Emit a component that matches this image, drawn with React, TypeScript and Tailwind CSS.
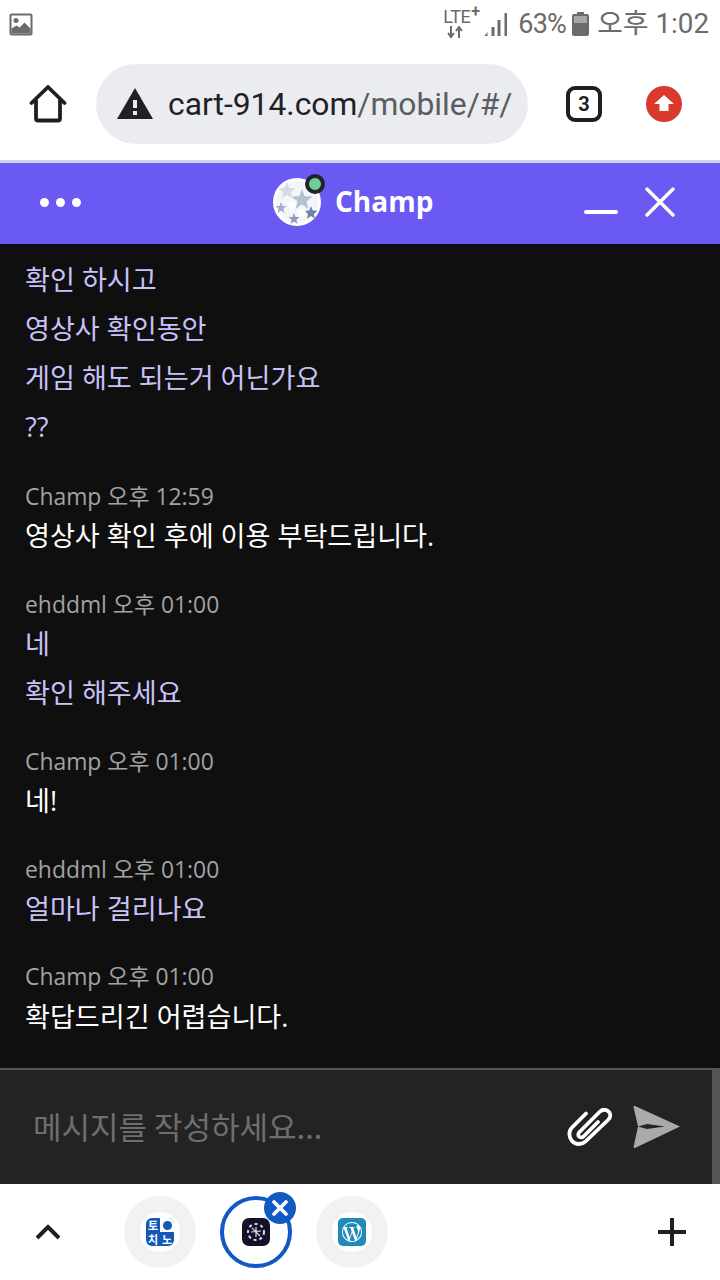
import React from "react";
import { SiWordpress } from "react-icons/si";

const sans = "font-['Open_Sans','Noto_Sans_CJK_KR',sans-serif]";

function Star({ x, y, r, fill }: { x: number; y: number; r: number; fill: string }) {
  const pts: string[] = [];
  for (let i = 0; i < 10; i++) {
    const a = -Math.PI / 2 + (i * Math.PI) / 5;
    const rr = i % 2 === 0 ? r : r * 0.42;
    pts.push(`${(x + rr * Math.cos(a)).toFixed(1)},${(y + rr * Math.sin(a)).toFixed(1)}`);
  }
  return <polygon points={pts.join(" ")} fill={fill} />;
}

function Ball({ size }: { size: number }) {
  return (
    <svg width={size} height={size} viewBox="0 0 48 48">
      <circle cx="24" cy="24" r="24" fill="#fff" />
      <circle cx="24" cy="24" r="21" fill="#f3f5f8" />
      <Star x={14} y={13} r={9} fill="#d5dbe6" />
      <Star x={29} y={22} r={11} fill="#b4c0d3" />
      <Star x={38} y={35} r={7} fill="#6d83a6" />
      <Star x={21} y={41} r={6} fill="#8c9dba" />
      <Star x={8} y={30} r={6} fill="#9fb0c8" />
      <circle cx="19" cy="27" r="4" fill="#fff" />
      <circle cx="29" cy="35" r="4" fill="#fff" />
    </svg>
  );
}

function StatusBar() {
  return (
    <div className="h-[48px] flex items-center pl-[9px] pr-[11px] bg-white text-[#6b6b6b]">
      <svg width="24" height="23" viewBox="0 0 24 23">
        <rect x="0.5" y="0.5" width="23" height="22" rx="2" fill="#6b6b6b" />
        <rect x="2.5" y="2.5" width="19" height="18" fill="#fff" />
        <circle cx="7" cy="7.5" r="2.5" fill="#6b6b6b" />
        <path d="M2.5 20.5v-5l5-3 3 2 5-5 6 6v5z" fill="#6b6b6b" />
      </svg>
      <div className="ml-auto flex items-center">
        <div className="w-[39px] h-[30px] relative mr-[1px]">
          <span className="absolute left-0 top-[-2px] text-[18px] leading-[20px] font-['Roboto'] tracking-[-0.5px]">
            LTE
          </span>
          <span className="absolute left-[28px] top-[-5px] text-[16px] leading-[16px] font-['Roboto'] font-bold">
            +
          </span>
          <svg className="absolute left-[4px] top-[17px]" width="16" height="13" viewBox="0 0 16 13">
            <path d="M4 0v9M1 7l3 4 3-4M12 12V3M9 5l3-4 3 4" stroke="#6b6b6b" strokeWidth="2" fill="none" />
          </svg>
        </div>
        <svg width="25" height="24" viewBox="0 0 24 24" className="mr-[10px]">
          <path d="M1 24l3-4v4z" fill="#6b6b6b" />
          <rect x="8" y="15" width="3" height="9" fill="#6b6b6b" />
          <rect x="14" y="8" width="3" height="16" fill="#6b6b6b" />
          <rect x="21" y="1" width="2.5" height="23" fill="#6b6b6b" />
        </svg>
        <span className="text-[27px] leading-[50px] font-['Roboto'] tracking-[-0.8px] w-[51px] whitespace-nowrap">63%</span>
        <svg width="17" height="24" viewBox="0 0 17 24" className="ml-[3px] mr-[8px]">
          <path d="M5 0h7v2h3a2 2 0 012 2v18a2 2 0 01-2 2H2a2 2 0 01-2-2V4a2 2 0 012-2h3z" fill="#6b6b6b" />
          <rect x="2" y="4" width="13" height="7" fill="#a8a8a8" />
        </svg>
        <span className="text-[27.800px] leading-[50px] font-['Roboto','Noto_Sans_CJK_KR',sans-serif] whitespace-nowrap">오후 1:02</span>
      </div>
    </div>
  );
}

function UrlBar() {
  return (
    <div className="h-[112px] flex items-center bg-white relative">
      <div className="w-[96px] flex justify-center">
        <svg width="38" height="38" viewBox="0 0 38 38">
          <path
            d="M2.5 18.5L19 2.5l16.500 16M7 15.500V34a2 2 0 002 2h20a2 2 0 002-2V15.500"
            transform="translate(0 -0.5)"
            fill="none"
            stroke="#1f1f1f"
            strokeWidth="3.8"
            strokeLinecap="round"
            strokeLinejoin="round"
          />
        </svg>
      </div>
      <div className="w-[432px] h-[80px] rounded-[40px] bg-[#ebecf0] flex items-center pl-[21px] overflow-hidden">
        <svg width="36" height="32" viewBox="0 0 36 32" className="shrink-0">
          <path d="M18 0l18 31H0z" fill="#202124" />
          <rect x="16" y="12" width="4" height="8" fill="#ebecf0" />
          <rect x="16" y="23" width="4" height="4" fill="#ebecf0" />
        </svg>
        <div className="ml-[15px] w-[345px] overflow-hidden whitespace-nowrap text-[31.800px] leading-[40px] font-['Roboto'] text-[#5a5d61]">
          <span className="text-[#202124]">cart-914.com</span>/mobile/#/
        </div>
      </div>
      <div className="ml-[38px] w-[36px] h-[36px] rounded-[9px] border-[4px] border-[#1f1f1f] flex items-center justify-center text-[20px] font-bold font-['Roboto'] text-[#1f1f1f]">
        3
      </div>
      <div className="ml-[44px] w-[36px] h-[36px] rounded-full bg-[#d93a2b] flex items-center justify-center">
        <svg width="20" height="18" viewBox="0 0 20 18">
          <path d="M10 0l10 9h-5.500v7h-9V9H0z" fill="#fff" />
        </svg>
      </div>
    </div>
  );
}

function Header() {
  return (
    <div className="h-[84px] bg-[#6a59f2] border-t-[3px] border-[#d3d3ea] pb-[3px] flex items-center relative">
      <div className="ml-[40px] flex gap-[7px]">
        <span className="w-[9px] h-[9px] rounded-full bg-white" />
        <span className="w-[9px] h-[9px] rounded-full bg-white" />
        <span className="w-[9px] h-[9px] rounded-full bg-white" />
      </div>
      <div className="ml-[192px] relative w-[48px] h-[48px]">
        <Ball size={48} />
        <span className="absolute left-[32px] top-[-4px] w-[20px] h-[20px] rounded-full bg-[#6fce96] border-[4px] border-[#20242a]" />
      </div>
      <span className="ml-[14px] mb-[2px] text-[28px] leading-[40px] font-bold font-['Open_Sans'] text-white">Champ</span>
      <div className="ml-auto flex items-center">
        <span className="w-[34px] h-[4px] rounded-full bg-white mt-[19px]" />
        <svg width="32" height="32" viewBox="0 0 32 32" className="ml-[26px] mr-[44px]">
          <path d="M3 3l26 26M29 3L3 29" stroke="#fff" strokeWidth="3.4" strokeLinecap="round" />
        </svg>
      </div>
    </div>
  );
}

type Group = { meta?: string; lines: string[]; mine: boolean };

const groups: Group[] = [
  { lines: ["확인 하시고", "영상사 확인동안", "게임 해도 되는거 어닌가요", "??"], mine: true },
  { meta: "Champ 오후 12:59", lines: ["영상사 확인 후에 이용 부탁드립니다."], mine: false },
  { meta: "ehddml 오후 01:00", lines: ["네", "확인 해주세요"], mine: true },
  { meta: "Champ 오후 01:00", lines: ["네!"], mine: false },
  { meta: "ehddml 오후 01:00", lines: ["얼마나 걸리나요"], mine: true },
  { meta: "Champ 오후 01:00", lines: ["확답드리긴 어렵습니다."], mine: false },
];

function Chat() {
  return (
    <div className={`h-[824px] bg-[#0f0f10] overflow-hidden px-[25px] pt-[11px] flex flex-col gap-[28.400px] ${sans}`}>
      {groups.map((g, i) => (
        <div key={i} className="first:mb-[1.500px]">
          {g.meta && <div className="h-[30.500px] leading-[31px] text-[22.900px] text-[#a2a2a2]">{g.meta}</div>}
          {g.lines.map((l) => (
            <div
              key={l}
              className={`h-[49px] leading-[49px] text-[27.100px] ${g.mine ? "text-[#c9c2f8]" : "text-white"}`}
            >
              {l}
            </div>
          ))}
        </div>
      ))}
    </div>
  );
}

function InputBar() {
  return (
    <div className="h-[116px] bg-[#232323] border-t-[2px] border-[#555555] flex relative">
      <div className="flex-1 flex items-center pl-[33px]">
        <span className="text-[31px] leading-[40px] text-[#6e6e6e] font-['Noto_Sans_CJK_KR',sans-serif] relative top-[-1px]">
          메시지를 작성하세요...
        </span>
        <svg width="46" height="42" viewBox="0 0 46 42" className="ml-auto mr-[20px] mt-[3px]">
          <path
            d="M19 5.500L5 19.500C1.500 23 1.500 29 5 33s10 4 14 0L41 12c3-3 3-6.500.5-8.500s-6-2.500-9 .5L12.500 24c-1.500 1.500-1.500 3.500-.5 4.500s3 1.500 4.500 0L31 14"
            fill="none"
            stroke="#fff"
            strokeWidth="3.800"
            strokeLinecap="round"
          />
        </svg>
        <svg width="48" height="44" viewBox="0 0 48 44" className="mr-[31px]">
          <path
            d="M2 1L47 21.500 2 43c-1 .4-1.700-.3-1.400-1.300L5 21.500 14 24l18-2.500L14 19 5 21.500.6 2.300C.3 1.300 1 .6 2 1z"
            fill="#aaaaaa"
          />
        </svg>
      </div>
      <div className="w-[8px] bg-[#555555]" />
    </div>
  );
}

function Tab({ children, active }: { children: React.ReactNode; active?: boolean }) {
  return (
    <div
      className={`relative w-[72px] h-[72px] rounded-full flex items-center justify-center ${
        active ? "bg-white border-[4px] border-[#1259c3]" : "bg-[#f1f2f4]"
      }`}
    >
      {!active && <span className="absolute inset-[16px] rounded-full bg-white" />}
      {children}
      {active && (
        <span className="absolute right-[-8px] top-[-8px] w-[32px] h-[32px] rounded-full bg-[#1259c3] flex items-center justify-center">
          <svg width="16" height="16" viewBox="0 0 16 16">
            <path d="M2 2l12 12M14 2L2 14" stroke="#fff" strokeWidth="3.600" strokeLinecap="round" />
          </svg>
        </span>
      )}
    </div>
  );
}

function BottomBar() {
  return (
    <div className="h-[96px] bg-white flex items-center relative">
      <div className="w-[96px] flex justify-center">
        <svg width="26" height="16" viewBox="0 0 26 16">
          <path d="M2 14L13 3l11 11" fill="none" stroke="#1f1f1f" strokeWidth="4" />
        </svg>
      </div>
      <div className="ml-[28px] flex gap-[24px]">
        <Tab>
          <div className="relative w-[28px] h-[28px] rounded-[6px] bg-[#1259b8] overflow-hidden grid grid-cols-2 grid-rows-2 text-[11px] leading-[14px] font-bold text-white text-center font-['Noto_Sans_CJK_KR',sans-serif]">
            <span className="h-[14px] leading-[14px]">토</span>
            <span className="bg-white flex items-center justify-center">
              <span className="w-[9px] h-[9px] rounded-full bg-[#1259b8]" />
            </span>
            <span className="h-[14px] leading-[14px]">치</span>
            <span className="h-[14px] leading-[14px]">노</span>
          </div>
        </Tab>
        <Tab active>
          <div className="relative w-[28px] h-[28px] rounded-[7px] bg-[#14122b] flex items-center justify-center">
            <svg width="20" height="20" viewBox="0 0 20 20">
              <circle cx="10" cy="10" r="8" fill="none" stroke="#d9dbe6" strokeWidth="2" strokeDasharray="3 3" />
              <path d="M10 5v10M5 10l10-1M6 6l8 8" stroke="#d9dbe6" strokeWidth="1.200" />
            </svg>
          </div>
        </Tab>
        <Tab>
          <div className="relative w-[28px] h-[28px] rounded-[5px] bg-[#1f8bb8] flex items-center justify-center">
            <SiWordpress className="text-white text-[20px]" />
          </div>
        </Tab>
      </div>
      <svg width="28" height="28" viewBox="0 0 28 28" className="ml-auto mr-[34px]">
        <path d="M14 0v28M0 14h28" stroke="#1f1f1f" strokeWidth="4" />
      </svg>
    </div>
  );
}

export default function App() {
  return (
    <div className="w-[720px] h-[1280px] flex flex-col overflow-hidden bg-white">
      <StatusBar />
      <UrlBar />
      <Header />
      <Chat />
      <InputBar />
      <BottomBar />
    </div>
  );
}
